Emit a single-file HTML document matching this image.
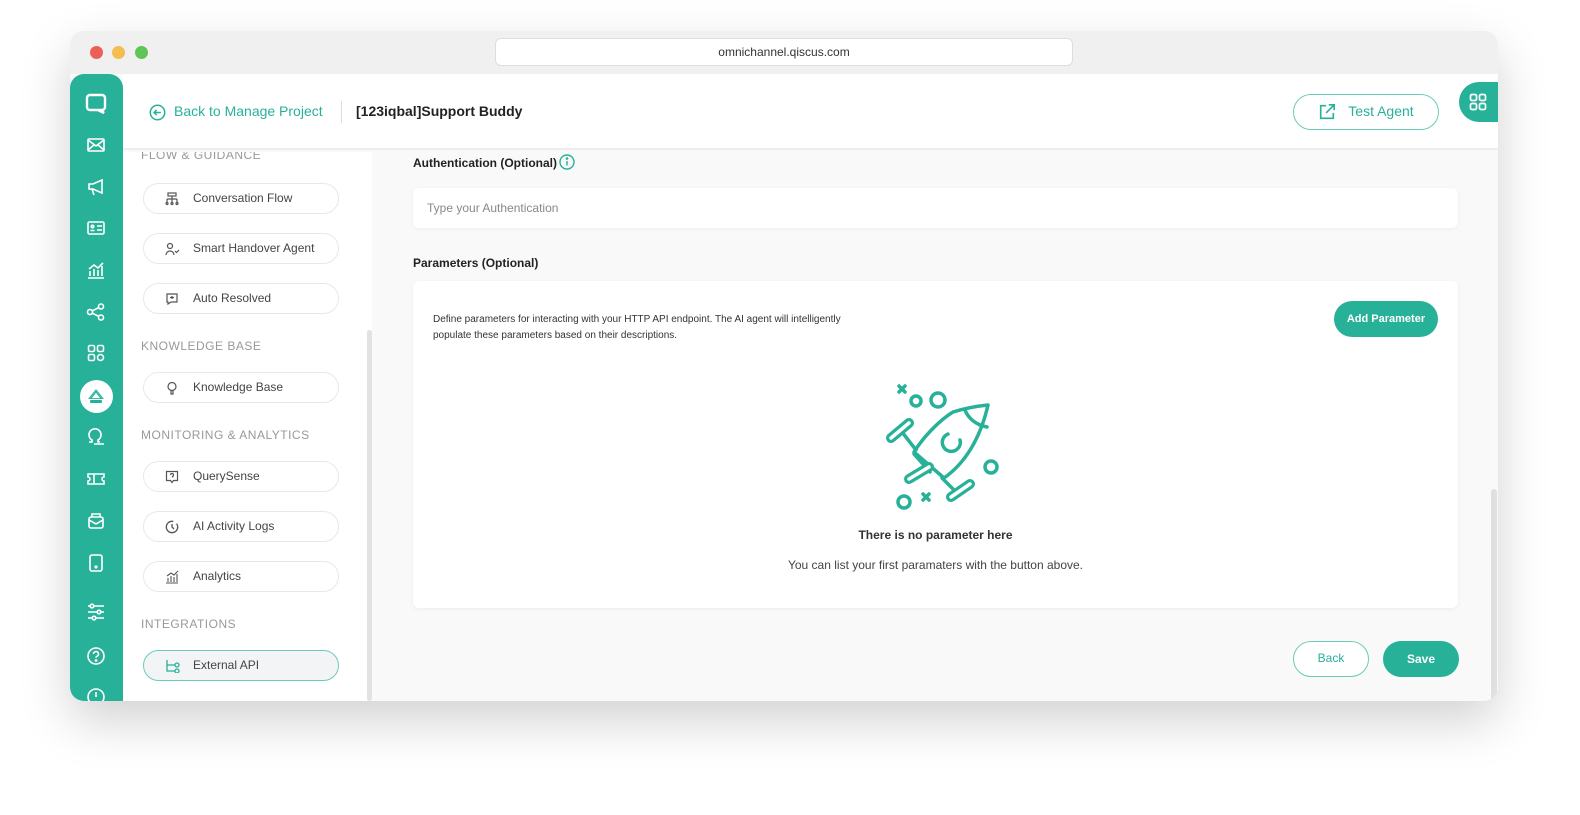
<!DOCTYPE html>
<html><head><meta charset="utf-8"><style>
*{box-sizing:border-box;margin:0;padding:0}
body{width:1580px;height:815px;background:#fff;font-family:"Liberation Sans",sans-serif;position:relative;overflow:hidden}
.win{position:absolute;left:70px;top:31px;width:1428px;height:670px;border-radius:14px;background:#f0f0f0;box-shadow:0 20px 50px rgba(0,0,0,.18);overflow:hidden}
.dot{position:absolute;top:15px;width:13px;height:13px;border-radius:50%}
.url{position:absolute;left:425px;top:7px;width:578px;height:28px;background:#fff;border:1px solid #ddd;border-radius:6px;font-size:12px;color:#333;text-align:center;line-height:27px}
.app{position:absolute;left:0;top:43px;width:1428px;height:627px;background:#f9f9f9}
.side{position:absolute;left:0;top:0;width:53px;height:627px;background:#27b199;border-radius:14px 14px 0 0}
.ic{position:absolute;left:16px;width:20px;height:20px}
.hdr{position:absolute;left:53px;top:0;right:0;height:76px;background:#fff;border-bottom:2px solid #eee}
.nav{position:absolute;left:53px;top:78px;width:249px;height:549px;background:#fff;overflow:hidden}
.sec{position:absolute;left:18px;font-size:12px;color:#999;letter-spacing:.5px}
.item{position:absolute;left:20px;width:196px;height:31px;border:1px solid #e8e8e8;border-radius:16px;font-size:12px;color:#444;line-height:29px;padding-left:49px}
.item svg{position:absolute;left:21px;top:8px}
.lbl{position:absolute;font-size:12px;font-weight:bold;color:#222}
.btn{position:absolute;border-radius:18px;font-size:12px;text-align:center}
</style></head><body>
<div class="win">
<div class="dot" style="left:20px;background:#ec5f57"></div>
<div class="dot" style="left:42px;background:#f4bd4f"></div>
<div class="dot" style="left:65px;background:#5fc554"></div>
<div class="url">omnichannel.qiscus.com</div>
<div class="app">
<div class="side">
<svg class="ic" style="top:18px;left:14px;width:24px;height:24px" viewBox="0 0 24 24" fill="none" stroke="#fff" stroke-width="2.4"><path d="M6 3h12a3 3 0 0 1 3 3v9a3 3 0 0 1-3 3h-1l3 3-6-3H6a3 3 0 0 1-3-3V6a3 3 0 0 1 3-3z"/></svg>
<svg class="ic" style="top:61px" viewBox="0 0 20 20" fill="none" stroke="#fff" stroke-width="1.6"><rect x="2" y="4" width="16" height="12" rx="1"/><path d="M2 5l8 6 8-6M2 15l6-5M18 15l-6-5"/></svg>
<svg class="ic" style="top:103px" viewBox="0 0 20 20" fill="none" stroke="#fff" stroke-width="1.6"><path d="M3 7h4l9-4v13L7 12H3zM6 12l2 6"/></svg>
<svg class="ic" style="top:144px" viewBox="0 0 20 20" fill="none" stroke="#fff" stroke-width="1.6"><rect x="2" y="4" width="16" height="12" rx="1.5"/><circle cx="6.5" cy="8.5" r="1.2"/><path d="M4.5 12.5h4M11 8h5M11 12h5"/></svg>
<svg class="ic" style="top:186px" viewBox="0 0 20 20" fill="none" stroke="#fff" stroke-width="1.6"><path d="M2 18h16M4 16v-5M8 16V9M12 16v-6M16 16V6M3 9l5-4 4 3 5-5"/></svg>
<svg class="ic" style="top:228px" viewBox="0 0 20 20" fill="none" stroke="#fff" stroke-width="1.6"><circle cx="4" cy="10" r="2.5"/><circle cx="15" cy="4.5" r="2.5"/><circle cx="15" cy="15.5" r="2.5"/><path d="M6 9l7-3.5M6 11l7 3.5"/></svg>
<svg class="ic" style="top:269px" viewBox="0 0 20 20" fill="none" stroke="#fff" stroke-width="1.6"><rect x="2.5" y="2.5" width="6" height="6" rx="1.5"/><rect x="11.5" y="2.5" width="6" height="6" rx="1.5"/><rect x="2.5" y="11.5" width="6" height="6" rx="1.5"/><circle cx="14.5" cy="14.5" r="3"/></svg>
<div style="position:absolute;left:10px;top:306px;width:33px;height:33px;border-radius:50%;background:#fff"></div>
<svg class="ic" style="top:313px" viewBox="0 0 20 20" fill="#27b199"><path d="M10 2l8 10H2z" opacity=".9"/><path d="M10 6l4 5H6z" fill="#fff"/><rect x="4" y="13" width="12" height="3" rx="1"/></svg>
<svg class="ic" style="top:353px" viewBox="0 0 20 20" fill="none" stroke="#fff" stroke-width="1.6"><path d="M3 15h3v-2a6 6 0 1 1 6 0v2h2M8 17h10M10 17"/></svg>
<svg class="ic" style="top:395px" viewBox="0 0 20 20" fill="none" stroke="#fff" stroke-width="1.6"><path d="M2 5h16v3a2 2 0 0 0 0 4v3H2v-3a2 2 0 0 0 0-4zM8 5v10"/></svg>
<svg class="ic" style="top:437px" viewBox="0 0 20 20" fill="none" stroke="#fff" stroke-width="1.6"><rect x="3" y="6" width="14" height="11" rx="2"/><path d="M3 9l7 4 7-4M6 6V3h8v3"/></svg>
<svg class="ic" style="top:479px" viewBox="0 0 20 20" fill="none" stroke="#fff" stroke-width="1.6"><rect x="4" y="2" width="12" height="16" rx="2"/><circle cx="10" cy="14" r=".8" fill="#fff"/></svg>
<svg class="ic" style="top:528px" viewBox="0 0 20 20" fill="none" stroke="#fff" stroke-width="1.6"><path d="M2 4h16M2 10h16M2 16h16"/><circle cx="6" cy="4" r="1.8" fill="#27b199"/><circle cx="13" cy="10" r="1.8" fill="#27b199"/><circle cx="8" cy="16" r="1.8" fill="#27b199"/></svg>
<svg class="ic" style="top:572px" viewBox="0 0 20 20" fill="none" stroke="#fff" stroke-width="1.6"><circle cx="10" cy="10" r="8"/><path d="M7.5 8a2.5 2.5 0 1 1 3.5 2.3c-.7.3-1 .8-1 1.5"/><circle cx="10" cy="14.5" r=".6" fill="#fff"/></svg>
<svg class="ic" style="top:613px" viewBox="0 0 20 20" fill="none" stroke="#fff" stroke-width="1.6"><circle cx="10" cy="10" r="8"/><path d="M10 5v5"/></svg>
</div>
<div class="hdr">
<svg style="position:absolute;left:26px;top:30px" width="17" height="17" viewBox="0 0 20 20" fill="none" stroke="#27b199" stroke-width="1.8"><circle cx="10" cy="10" r="8.5"/><path d="M14 10H6M9 7l-3 3 3 3"/></svg>
<div style="position:absolute;left:51px;top:29px;font-size:14px;color:#27b199">Back to Manage Project</div>
<div style="position:absolute;left:218px;top:27px;width:1px;height:22px;background:#ddd"></div>
<div style="position:absolute;left:233px;top:29px;font-size:14px;font-weight:bold;color:#222">[123iqbal]Support Buddy</div>
<div class="btn" style="left:1170px;top:20px;width:146px;height:36px;border:1.5px solid #6ccbb8;color:#27b199;font-size:14px;line-height:33px;padding-left:30px">Test Agent
<svg style="position:absolute;left:24px;top:8px" width="18" height="18" viewBox="0 0 20 20" fill="none" stroke="#27b199" stroke-width="1.8"><path d="M9 3H3v14h14v-6M12 2h6v6M18 2L9 11"/></svg></div>
<div style="position:absolute;left:1336px;top:8px;width:50px;height:40px;background:#27b199;border-radius:20px 0 0 20px"></div>
<svg style="position:absolute;left:1345px;top:18px" width="20" height="20" viewBox="0 0 20 20" fill="none" stroke="#fff" stroke-width="1.7"><rect x="2.5" y="2.5" width="6" height="6" rx="1.5"/><rect x="11.5" y="2.5" width="6" height="6" rx="1.5"/><rect x="2.5" y="11.5" width="6" height="6" rx="1.5"/><rect x="11.5" y="11.5" width="6" height="6" rx="1.5"/></svg>
</div>
<div class="nav">
<div class="sec" style="top:-4px">FLOW &amp; GUIDANCE</div>
<div class="item" style="top:31px"><svg width="14" height="14" viewBox="0 0 14 14" fill="none" stroke="#555" stroke-width="1.2"><rect x="3" y="1" width="8" height="3"/><path d="M7 4v3M2 7h10M2 7v3M7 7v3M12 7v3"/><circle cx="2" cy="11.5" r="1"/><circle cx="7" cy="11.5" r="1"/><circle cx="12" cy="11.5" r="1"/></svg>Conversation Flow</div>
<div class="item" style="top:81px"><svg width="15" height="14" viewBox="0 0 15 14" fill="none" stroke="#555" stroke-width="1.2"><circle cx="5" cy="4" r="2.5"/><path d="M1 13a4 4 0 0 1 8 0M10 9l1.5 1.5L14 8"/></svg>Smart Handover Agent</div>
<div class="item" style="top:131px"><svg width="14" height="14" viewBox="0 0 14 14" fill="none" stroke="#555" stroke-width="1.2"><path d="M2 2h10v8H6l-3 2v-2H2zM7 4v3M5 5.5h4"/></svg>Auto Resolved</div>
<div class="sec" style="top:187px">KNOWLEDGE BASE</div>
<div class="item" style="top:220px"><svg width="14" height="14" viewBox="0 0 14 14" fill="none" stroke="#555" stroke-width="1.2"><circle cx="7" cy="5.5" r="4"/><path d="M6 10v3h2v-3"/></svg>Knowledge Base</div>
<div class="sec" style="top:276px">MONITORING &amp; ANALYTICS</div>
<div class="item" style="top:309px"><svg width="14" height="14" viewBox="0 0 14 14" fill="none" stroke="#555" stroke-width="1.2"><path d="M1.5 1.5h11v9H8.5L7 12.5 5.5 10.5h-4z"/><path d="M5.5 5a1.5 1.5 0 1 1 2 1.4V7.5"/></svg>QuerySense</div>
<div class="item" style="top:359px"><svg width="14" height="14" viewBox="0 0 14 14" fill="none" stroke="#555" stroke-width="1.3"><circle cx="7" cy="7" r="5.7" stroke-dasharray="28 4"/><path d="M7 4v3l2 2"/></svg>AI Activity Logs</div>
<div class="item" style="top:409px"><svg width="14" height="14" viewBox="0 0 14 14" fill="none" stroke="#555" stroke-width="1.1"><path d="M1 13h12M3 12V8M6 12V6M9 12V7M12 12V4M2 6l4-3 3 2 4-4"/></svg>Analytics</div>
<div class="sec" style="top:465px">INTEGRATIONS</div>
<div class="item" style="top:498px;background:#f2f4f6;border:1.5px solid #6ccbb8"><svg width="15" height="14" viewBox="0 0 15 14" fill="none" stroke="#27b199" stroke-width="1.3"><path d="M2 1v11h8M2 6h8"/><circle cx="12" cy="6" r="2"/><circle cx="12" cy="12" r="2"/></svg>External API</div>
<div style="position:absolute;left:244px;top:178px;width:5px;height:371px;background:#e2e2e2;border-radius:3px"></div>
</div>
<div class="lbl" style="left:343px;top:82px">Authentication (Optional)</div>
<svg style="position:absolute;left:489px;top:80px" width="16" height="16" viewBox="0 0 16 16" fill="none" stroke="#27b199" stroke-width="1.4"><circle cx="8" cy="8" r="7"/><path d="M8 7v4.5"/><circle cx="8" cy="4.5" r=".6" fill="#27b199"/></svg>
<div style="position:absolute;left:343px;top:114px;width:1045px;height:40px;background:#fff;border-radius:6px;box-shadow:0 1px 4px rgba(0,0,0,.05);font-size:12px;color:#888;line-height:40px;padding-left:14px">Type your Authentication</div>
<div class="lbl" style="left:343px;top:182px">Parameters (Optional)</div>
<div style="position:absolute;left:343px;top:207px;width:1045px;height:327px;background:#fff;border-radius:6px;box-shadow:0 1px 4px rgba(0,0,0,.06)">
<div style="position:absolute;left:20px;top:31px;font-size:10px;color:#333;line-height:16px">Define parameters for interacting with your HTTP API endpoint. The AI agent will intelligently<br>populate these parameters based on their descriptions.</div>
<div class="btn" style="left:921px;top:20px;width:104px;height:36px;background:#27b199;color:#fff;font-weight:bold;font-size:11px;line-height:36px">Add Parameter</div>
<svg style="position:absolute;left:447px;top:89px" width="150" height="140" viewBox="0 0 150 140" fill="none" stroke="#27b199" stroke-width="3.5" stroke-linecap="round" stroke-linejoin="round">
<path d="M39 16l6 6M45 16l-6 6M63 124l6 6M69 124l-6 6"/>
<circle cx="56" cy="31" r="5"/><circle cx="78" cy="30" r="7"/>
<circle cx="131" cy="97" r="6"/><circle cx="44" cy="132" r="6"/>
<path d="M93 42C80 50 64 66 54 82L84 108C104 94 120 70 128 35C118 36 106 38 93 42"/>
<path d="M105 40C108 48 116 55 127 57"/>
<path d="M88 64a9 9 0 1 0 12 6"/>
<path d="M42 62l14 18M54 84l16 18M82 108l12 12"/>
<line x1="31" y1="68" x2="49" y2="53" stroke-width="10"/><line x1="31" y1="68" x2="49" y2="53" stroke="#fff" stroke-width="3.5"/>
<line x1="49" y1="109" x2="69" y2="97" stroke-width="10"/><line x1="49" y1="109" x2="69" y2="97" stroke="#fff" stroke-width="3.5"/>
<line x1="91" y1="127" x2="110" y2="114" stroke-width="10"/><line x1="91" y1="127" x2="110" y2="114" stroke="#fff" stroke-width="3.5"/>
</svg>
<div style="position:absolute;left:0;width:100%;top:247px;text-align:center;font-size:12px;font-weight:bold;color:#333">There is no parameter here</div>
<div style="position:absolute;left:0;width:100%;top:277px;text-align:center;font-size:12px;color:#444">You can list your first paramaters with the button above.</div>
</div>
<div class="btn" style="left:1223px;top:567px;width:76px;height:36px;border:1.5px solid #6ccbb8;background:#fff;color:#27b199;line-height:33px">Back</div>
<div class="btn" style="left:1313px;top:567px;width:76px;height:36px;background:#27b199;color:#fff;line-height:36px;font-weight:bold">Save</div>
<div style="position:absolute;left:1421px;top:415px;width:6px;height:212px;background:#e0e0e0;border-radius:3px"></div>
</div>
</div>
</body></html>
